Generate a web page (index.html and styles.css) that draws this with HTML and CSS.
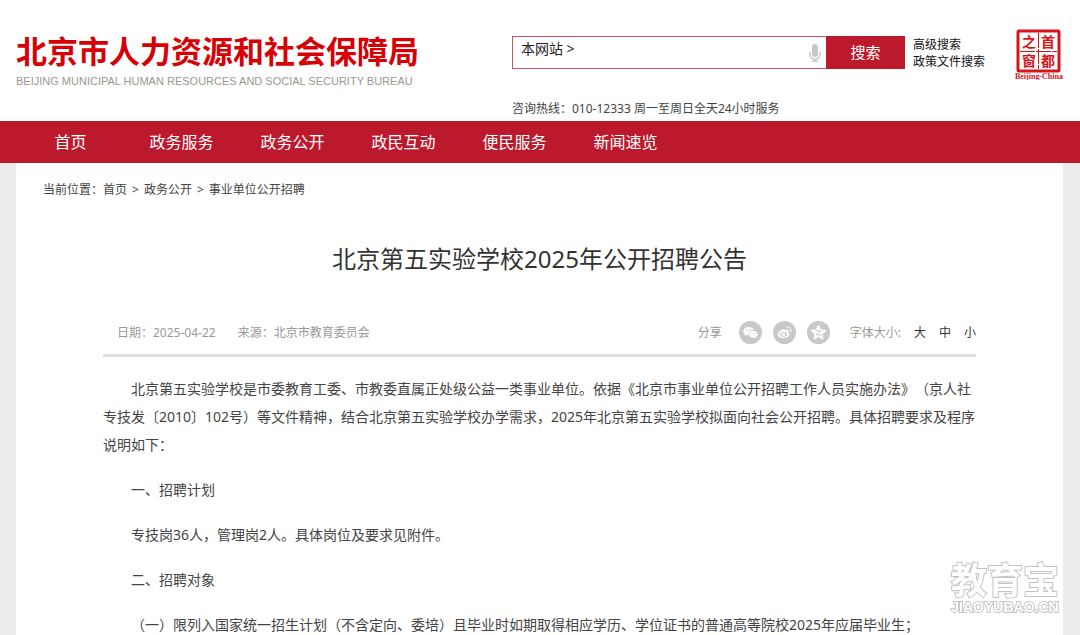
FILE: index.html
```html
<!DOCTYPE html>
<html lang="zh-CN">
<head>
    <meta charset="UTF-8">
    <meta name="viewport" content="width=device-width, initial-scale=1.0">
    <title>北京第五实验学校2025年公开招聘公告</title>
    <link rel="stylesheet" href="styles.css">
</head>
<body>
    <header class="header">
        <a class="logo" href="#">
            <span class="logo-cn">北京市人力资源和社会保障局</span>
            <span class="logo-en">BEIJING MUNICIPAL HUMAN RESOURCES AND SOCIAL SECURITY BUREAU</span>
        </a>
        <div class="search-area">
            <div class="search-row">
                <form class="search-form">
                    <label for="keyword">本网站 &gt;</label>
                    <input type="text" id="keyword">
                    <button type="button" class="mic" aria-label="语音输入">
                        <svg width="12" height="18" viewBox="0 0 12 18">
                            <rect x="3" y="0" width="6" height="13" rx="3" fill="#c8c8c8"/>
                            <path d="M1 8v2.500a5 4.500 0 0 0 10 0V8M6 15v2M3 17h6" fill="none" stroke="#c8c8c8" stroke-width="1.500"/>
                        </svg>
                    </button>
                    <button type="submit" class="search-btn">搜索</button>
                </form>
                <div class="search-links">
                    <a href="#">高级搜索</a>
                    <a href="#">政策文件搜索</a>
                </div>
            </div>
            <p class="hotline">咨询热线：010-12333 周一至周日全天24小时服务</p>
        </div>
        <a class="seal" href="#" aria-label="首都之窗">
            <svg width="50" height="52" viewBox="0 0 50 52">
                <rect x="4" y="3" width="41" height="40" rx="1" fill="none" stroke="#d7141a" stroke-width="3"/>
                <path d="M24.500 5v36M6 23.500h37" stroke="#d7141a" stroke-width="1" stroke-dasharray="15 1"/>
                <g class="seal-text">
                    <text x="15" y="19">之</text>
                    <text x="34" y="19">首</text>
                    <text x="15" y="38">窗</text>
                    <text x="34" y="38">都</text>
                </g>
                <text class="seal-en" x="25" y="51">Beijing-China</text>
            </svg>
        </a>
    </header>

    <nav class="nav">
        <a href="#">首页</a>
        <a href="#">政务服务</a>
        <a href="#">政务公开</a>
        <a href="#">政民互动</a>
        <a href="#">便民服务</a>
        <a href="#">新闻速览</a>
    </nav>

    <main class="main">
        <div class="crumbs">
            <span>当前位置：<a href="#">首页</a></span>
            <span>&gt;</span>
            <a href="#">政务公开</a>
            <span>&gt;</span>
            <a href="#">事业单位公开招聘</a>
        </div>
        <article class="article">
            <h1>北京第五实验学校2025年公开招聘公告</h1>
            <div class="meta">
                <span>日期：2025-04-22</span>
                <span class="source">来源：北京市教育委员会</span>
                <span class="share">分享</span>
                <div class="share-icons">
                    <a href="#" aria-label="微信">
                        <svg width="23" height="23" viewBox="0 0 23 23">
                            <circle cx="11.500" cy="11.500" r="11.500" fill="#c8c8c8"/>
                            <path d="M9.500 6C6.500 6 4.300 7.800 4.300 10.200c0 1.400.7 2.500 1.900 3.300l-.5 1.600 2-1c.8.2 1.500.3 2.300.2-.9-3 1.600-5.400 4.700-5.200C14.200 7.300 12.100 6 9.500 6z" fill="#fff"/>
                            <path d="M14.400 9.700c-2.500 0-4.300 1.500-4.300 3.500s1.900 3.500 4.300 3.500c.5 0 1-.1 1.500-.2l1.500.8-.4-1.400c1-.7 1.700-1.600 1.700-2.700 0-2-1.900-3.500-4.300-3.500z" fill="#fff"/>
                            <g fill="#c8c8c8"><circle cx="7.800" cy="9" r=".7"/><circle cx="11.300" cy="9" r=".7"/><circle cx="13" cy="12.300" r=".6"/><circle cx="15.900" cy="12.300" r=".6"/></g>
                        </svg>
                    </a>
                    <a href="#" aria-label="微博">
                        <svg width="23" height="23" viewBox="0 0 23 23">
                            <circle cx="11.500" cy="11.500" r="11.500" fill="#c8c8c8"/>
                            <path d="M10.300 8c1-.3 1.700.3 1.300 1.700 1.700-.7 3.400-.4 2.900 1.200 3.600 1.200 1.700 6.100-4.200 6.100-6 0-7.300-3.900-3.800-7 1.200-1.100 2.500-1.800 3.800-2z" fill="#fff"/>
                            <ellipse cx="10.100" cy="13.300" rx="3.900" ry="2.600" fill="#c8c8c8"/>
                            <ellipse cx="9.700" cy="13.500" rx="2.600" ry="2" fill="#fff"/>
                            <circle cx="9" cy="13.900" r=".8" fill="#c8c8c8"/>
                            <path d="M14 6.200c2.900-.6 4.900 1.800 4 4.600M14.100 8.300c1.300-.2 2.100.7 1.800 2" fill="none" stroke="#fff" stroke-linecap="round"/>
                        </svg>
                    </a>
                    <a href="#" aria-label="QQ空间">
                        <svg width="23" height="23" viewBox="0 0 23 23">
                            <circle cx="11.500" cy="11.500" r="11.500" fill="#c8c8c8"/>
                            <path d="M11.500 4l2.200 4.800 5.300.6-3.900 3.600 1 5.200-4.600-2.600-4.600 2.600 1-5.200L4 9.400l5.300-.6z" fill="#fff" stroke="#fff" stroke-linejoin="round"/>
                            <path d="M8.500 9.800h5.400l-4.700 3.900c1.800.5 3.700.5 5.500.1" fill="none" stroke="#c8c8c8"/>
                        </svg>
                    </a>
                </div>
                <div class="font-size">
                    <span>字体大小:</span>
                    <button type="button">大</button>
                    <button type="button">中</button>
                    <button type="button">小</button>
                </div>
            </div>
            <div class="content">
                <p>北京第五实验学校是市委教育工委、市教委直属正处级公益一类事业单位。依据《北京市事业单位公开招聘工作人员实施办法》（京人社专技发〔2010〕102号）等文件精神，结合北京第五实验学校办学需求，2025年北京第五实验学校拟面向社会公开招聘。具体招聘要求及程序说明如下：</p>
                <p>一、招聘计划</p>
                <p>专技岗36人，管理岗2人。具体岗位及要求见附件。</p>
                <p>二、招聘对象</p>
                <p>（一）限列入国家统一招生计划（不含定向、委培）且毕业时如期取得相应学历、学位证书的普通高等院校2025年应届毕业生；</p>
            </div>
        </article>
    </main>

    <div class="watermark">
        <span class="watermark-cn">教育宝</span>
        <span class="watermark-en">JIAOYUBAO.CN</span>
    </div>
</body>
</html>
```
FILE: styles.css
```css
* {
    box-sizing: border-box;
}

body {
    margin: 0;
    background: #ececec;
    color: #444;
    font-family: "Noto Sans", "Noto Sans CJK SC", sans-serif;
    font-size: 12px;
    text-spacing-trim: space-all;
}

a {
    color: inherit;
    text-decoration: none;
}

button {
    border: none;
    padding: 0;
    background: none;
    font-family: inherit;
    cursor: pointer;
}

/* header */
.header {
    display: flex;
    align-items: flex-start;
    min-height: 121px;
    padding: 28px 16px 0 16px;
    background: white;
}

.logo {
    display: flex;
    flex-direction: column;
    flex: 1;
    white-space: nowrap;
}

.logo-cn {
    color: #d70005;
    font-family: "Noto Sans CJK SC", sans-serif;
    font-size: 31px;
    font-weight: bold;
    line-height: 44px;
}

.logo-en {
    color: #999890;
    font-family: "Liberation Sans", Arial, sans-serif;
    font-size: 11px;
    line-height: 18px;
}

.search-area {
    padding-top: 8px;
}

.search-row {
    display: flex;
    gap: 8px;
}

.search-form {
    display: flex;
    width: 393px;
    height: 33px;
    border: 1px solid #cf5564;
    color: #222;
}

.search-form label {
    padding-left: 8px;
    font-size: 14px;
    line-height: 24px;
}

.search-form input {
    flex: 1;
    min-width: 0;
    border: none;
    outline: none;
    background: none;
    font-size: 14px;
}

.mic {
    display: flex;
    align-items: center;
    padding-right: 6px;
}

.search-btn {
    width: 79px;
    margin: -1px;
    padding-bottom: 3px;
    background: #bc1a2c;
    color: white;
    font-size: 15px;
}

.search-links {
    display: flex;
    flex-direction: column;
    color: #111;
    line-height: 17px;
}

.hotline {
    margin: 30px 0 0;
    line-height: 18px;
}

.seal {
    margin-left: 29px;
}

.seal svg {
    display: block;
}

.seal text {
    fill: #d7141a;
    text-anchor: middle;
    font-weight: bold;
}

.seal-text {
    font-size: 14px;
}

.seal .seal-en {
    font-family: "Liberation Serif", serif;
    font-size: 8px;
}

/* navigation */
.nav {
    display: flex;
    padding-left: 15px;
    background: #bc1a2c;
    color: white;
    font-size: 16px;
    line-height: 42px;
}

.nav a {
    width: 111px;
    text-align: center;
}

/* article */
.main {
    margin: 0 17px 0 16px;
    padding-top: 18px;
    background: white;
}

.crumbs {
    display: flex;
    gap: 5px;
    padding-left: 27px;
    line-height: 18px;
}

.article {
    padding: 0 87px;
}

h1 {
    margin: 42px 0 37px;
    color: #333;
    font-size: 24px;
    font-weight: normal;
    line-height: 36px;
    text-align: center;
}

.meta {
    display: flex;
    align-items: center;
    height: 43px;
    padding: 0 0 4px 14px;
    border-bottom: 3px solid #dedede;
    color: #999;
}

.source {
    margin-left: 22px;
}

.share {
    margin-left: auto;
}

.share-icons {
    display: flex;
    gap: 11px;
    margin: 0 20px 0 17px;
}

.share-icons svg {
    display: block;
}

.font-size {
    display: flex;
    gap: 13px;
}

.font-size button {
    color: #333;
    font-size: 12px;
}

.content {
    padding-top: 18px;
    font-size: 14px;
    line-height: 28px;
}

.content p {
    margin: 0 0 17px;
    text-indent: 2em;
}

/* watermark over the page corner */
.watermark {
    position: fixed;
    right: 21px;
    bottom: 20px;
    display: flex;
    flex-direction: column;
    align-items: center;
    color: white;
    font-weight: bold;
    paint-order: stroke;
    -webkit-text-stroke: 2px #c4c4c4;
}

.watermark-cn {
    font-size: 36px;
    line-height: 36px;
}

.watermark-en {
    font-family: "Liberation Sans", Arial, sans-serif;
    font-size: 14px;
    line-height: 16px;
}
```
